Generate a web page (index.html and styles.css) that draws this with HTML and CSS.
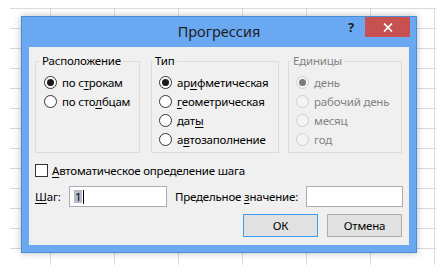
FILE: index.html
```html
<!DOCTYPE html>
<html>
<head>
    <meta charset="utf-8">
    <title>Прогрессия</title>
    <link rel="stylesheet" href="styles.css">
</head>
<body>
    <div class="sheet">
        <div class="dialog">
            <div class="titlebar">
                <div class="title">Прогрессия</div>
                <div class="controls">
                    <span class="help">?</span>
                    <span class="close">
                        <svg width="10" height="9" viewBox="0 0 10 9">
                            <path d="M1 0.5 L9 8.5 M9 0.5 L1 8.5" stroke="#fff" stroke-width="1.7" fill="none"/>
                        </svg>
                    </span>
                </div>
            </div>
            <div class="client">
                <div class="groups">
                    <fieldset class="group group-place">
                        <legend>Расположение</legend>
                        <div class="options">
                            <div class="option"><span class="radio checked"></span>по с<u>т</u>рокам</div>
                            <div class="option"><span class="radio"></span>по сто<u>л</u>бцам</div>
                        </div>
                    </fieldset>
                    <fieldset class="group group-type">
                        <legend>Тип</legend>
                        <div class="options">
                            <div class="option"><span class="radio checked"></span>ар<u>и</u>фметическая</div>
                            <div class="option"><span class="radio"></span><u>г</u>еометрическая</div>
                            <div class="option"><span class="radio"></span>дат<u>ы</u></div>
                            <div class="option"><span class="radio"></span>а<u>в</u>тозаполнение</div>
                        </div>
                    </fieldset>
                    <fieldset class="group group-units disabled">
                        <legend>Единицы</legend>
                        <div class="options">
                            <div class="option"><span class="radio checked"></span>день</div>
                            <div class="option"><span class="radio"></span>рабочий день</div>
                            <div class="option"><span class="radio"></span>месяц</div>
                            <div class="option"><span class="radio"></span>год</div>
                        </div>
                    </fieldset>
                </div>

                <div class="auto-row">
                    <span class="checkbox"></span><u>А</u>втоматическое определение шага
                </div>

                <div class="fields">
                    <span class="step-label"><u>Ш</u>аг:</span>
                    <div class="input input-step"><span class="sel">1</span><span class="caret"></span></div>
                    <span class="limit-label">Предельное <u>з</u>начение:</span>
                    <div class="input input-limit"></div>
                </div>

                <div class="buttons">
                    <div class="button default">ОК</div>
                    <div class="button">Отмена</div>
                </div>
            </div>
        </div>
    </div>
</body>
</html>
```

FILE: styles.css
```css
* {
    box-sizing: border-box;
}

html, body {
    margin: 0;
    overflow: hidden;
    background-color: #fff;
}

body {
    font-family: "Noto Sans", "Open Sans", sans-serif;
    font-size: 11.5px;
    letter-spacing: -0.2px;
    color: #000;
    white-space: nowrap;
}

u {
    text-underline-offset: 2px;
}

/* spreadsheet grid behind the dialog */
.sheet {
    margin: 8px 11px 0 10px;
    height: 257px;
    padding: 8px 0 0 11px;
    background-image:
        linear-gradient(to right, #dadada 1px, transparent 1px),
        linear-gradient(to bottom, #dadada 1px, transparent 1px);
    background-size: 64px 100%, 100% 20px;
    background-position: 40px 0, 0 0;
}

.dialog {
    width: 396px;
    height: 237px;
    border: 1px solid #4a8bd6;
    background-color: #6aa9f1;
    padding: 0 7px 7px;
    box-shadow: 0 0 7px rgba(0, 0, 0, 0.28);
    display: flex;
    flex-direction: column;
}

.titlebar {
    height: 30px;
    display: grid;
    grid-template-columns: 1fr auto 1fr;
    align-items: start;
}

.title {
    grid-column: 2;
    font-size: 14.5px;
    letter-spacing: 0;
    line-height: 20px;
    margin-top: 4px;
    color: #1e1e1e;
}

.controls {
    grid-column: 3;
    justify-self: end;
    display: flex;
    align-items: flex-start;
    margin-right: -1px;
}

.help {
    width: 20px;
    text-align: center;
    font-weight: bold;
    font-size: 13px;
    line-height: 16px;
    margin-top: 2px;
    margin-right: 4px;
    color: #1e1e1e;
}

.close {
    width: 45px;
    height: 20px;
    background-color: #c75050;
    display: flex;
    align-items: center;
    justify-content: center;
}

.client {
    flex: 1;
    background-color: #f0f0f0;
    padding: 6px 6px 0 6px;
}

.groups {
    display: flex;
    gap: 11px;
}

.group {
    margin: 0;
    padding: 0 0 0 7px;
    border: 1px solid #dcdcdc;
    height: 100px;
    min-width: 0;
}

.group legend {
    padding: 0 2px;
    line-height: 16px;
    margin-left: -6px;
}

.group-place {
    width: 105px;
    padding-left: 8px;
}

.group-place legend {
    margin-left: -4px;
}

.group-type {
    width: 128px;
}

.group-units {
    width: 114px;
    margin-left: -2px;
}

.group-units legend {
    margin-left: -5px;
}

.options {
    padding-top: 4px;
}

.option {
    display: flex;
    align-items: center;
    height: 19px;
}

.radio {
    width: 13px;
    height: 13px;
    border: 1px solid #333;
    border-radius: 50%;
    background-color: #fff;
    margin-right: 5px;
    display: flex;
    align-items: center;
    justify-content: center;
    flex-shrink: 0;
}

.radio.checked::after {
    content: "";
    width: 7px;
    height: 7px;
    border-radius: 50%;
    background-color: #1a1a1a;
}

.disabled,
.disabled legend {
    color: #838383;
}

.disabled .radio {
    border-color: #cfcfcf;
    background-color: #f4f4f4;
}

.disabled .radio.checked::after {
    background-color: #7a7a7a;
}

.auto-row {
    display: flex;
    align-items: center;
    height: 19px;
    margin-top: 8px;
}

.checkbox {
    width: 13px;
    height: 13px;
    border: 1px solid #333;
    background-color: #fff;
    margin-right: 4px;
}

.fields {
    display: flex;
    align-items: center;
    height: 21px;
    margin-top: 6px;
}

.step-label {
    width: 34px;
}

.input {
    height: 21px;
    border: 1px solid #abadb3;
    background-color: #fff;
    display: flex;
    align-items: center;
    padding-left: 4px;
}

.input-step {
    width: 98px;
}

.input-limit {
    width: 97px;
    margin-left: auto;
}

.sel {
    background-color: #b3bccb;
    line-height: 13px;
    padding: 0 1px;
}

.caret {
    width: 1px;
    height: 14px;
    background-color: #000;
    margin-left: 1px;
}

.limit-label {
    margin-left: 8px;
}

.buttons {
    display: flex;
    justify-content: flex-end;
    gap: 9px;
    margin-top: 7px;
    padding-right: 1px;
}

.button {
    width: 75px;
    height: 23px;
    border: 1px solid #adadad;
    background-color: #e1e1e1;
    display: flex;
    align-items: center;
    justify-content: center;
}

.button.default {
    border-color: #3c9cf0;
}
```
